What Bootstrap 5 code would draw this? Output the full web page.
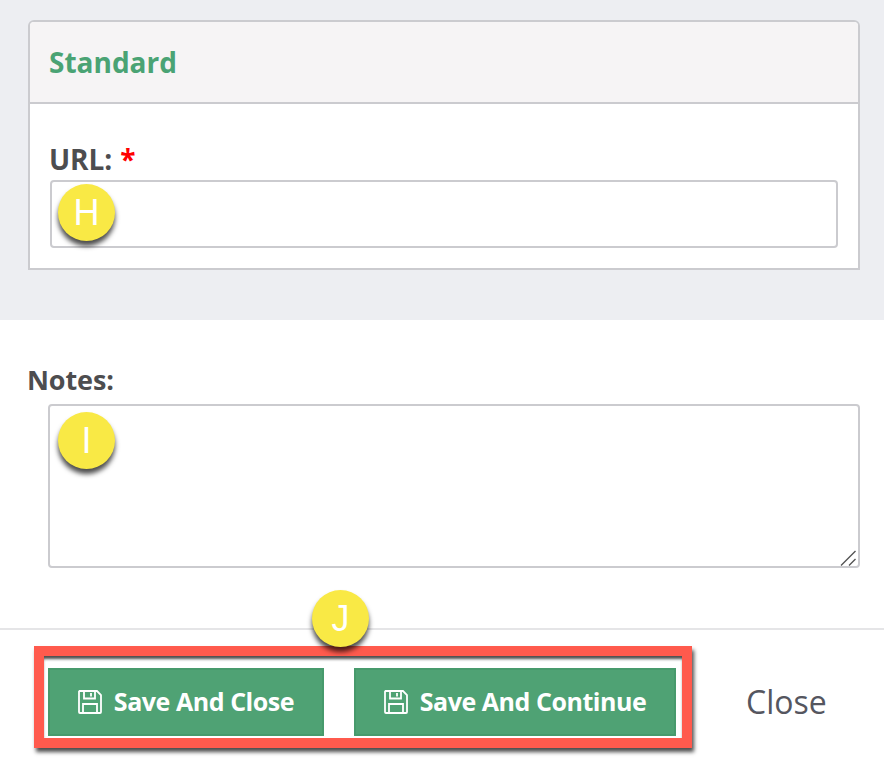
<!DOCTYPE html>
<html lang="en">
<head>
  <meta charset="UTF-8" />
  <meta name="viewport" content="width=device-width, initial-scale=1.0" />
  <title>Standard</title>
  <link href="https://cdn.jsdelivr.net/npm/bootstrap@5.3.0/dist/css/bootstrap.min.css" rel="stylesheet" />
  <style>
    html, body { height: 766px; overflow: hidden; }
    body { font-family: "Open Sans", sans-serif; color: #4d4d4f; background: #fff; }
    .top-band { height: 320px; padding: 20px 24px 0 28px; background: #edeef2; }
    .std-card { height: 250px; border: 2px solid #cbcbcf; border-radius: 6px 6px 0 0; background: #fff; }
    .std-card .card-header { height: 82px; padding: 0 19px; display: flex; align-items: center; background: #f6f4f5; border-bottom: 2px solid #cbcbcf; border-radius: 4px 4px 0 0; }
    .std-title { font-size: 28px; font-weight: 700; color: #4aa374; line-height: 1; }
    .std-card .card-body { padding: 39px 20px 0; }
    .field-label { display: block; margin: 0 0 0 -1px; font-size: 27px; font-weight: 700; line-height: 33px; letter-spacing: -.1px; }
    .url-label { font-size: 28px; }
    .req { color: #f00; margin-left: 1px; }
    .form-control.url-input { height: 68px; border: 2px solid #cbcbcf; border-radius: 4px; margin-top: 4px; }
    .notes-area { padding: 43px 24px 0 28px; }
    .notes-wrap { position: relative; width: 812px; height: 164px; margin: 8px 0 0 20px; }
    .form-control.notes-input { height: 164px; border: 2px solid #cbcbcf; border-radius: 4px; resize: none; }
    .notes-grip { position: absolute; right: 2px; bottom: 2px; }
    .foot-bar { margin-top: 60px; height: 138px; padding: 38px 0 0 48px; border-top: 2px solid #e5e5e7; }
    .btn.save-btn { height: 68px; padding: 0; display: flex; align-items: center; justify-content: center; gap: 12px; font-size: 25px; font-weight: 700; letter-spacing: -.45px; color: #fff; background: #4fa274; border: 2px solid #479a6c; border-radius: 0; }
    .save-one { width: 276px; }
    .save-two { width: 322px; margin-left: 30px; }
    .close-link { margin-left: 70px; font-size: 32px; line-height: 68px; color: #55565f; text-decoration: none; }
    .mark-dot { position: absolute; width: 57px; height: 57px; border-radius: 50%; background: #f9e945; color: #fff; font-family: "Liberation Sans", sans-serif; font-size: 36px; line-height: 57px; text-align: center; box-shadow: 0 5px 5px rgba(0, 0, 0, .7); z-index: 3; }
    .dot-h { left: 58px; top: 184px; }
    .dot-i { left: 58px; top: 412px; }
    .dot-j { left: 312px; top: 590px; }
    .red-box { position: absolute; left: 34px; top: 646px; width: 658px; height: 102px; border: 10px solid #ff5a4d; box-shadow: 2px 4px 4px rgba(0, 0, 0, .7), inset 0 4px 3px -1px rgba(0, 0, 0, .7); z-index: 2; pointer-events: none; }
  </style>
</head>
<body>
  <div class="top-band">
    <div class="card std-card">
      <div class="card-header"><span class="std-title">Standard</span></div>
      <div class="card-body">
        <label class="field-label url-label" for="url">URL: <span class="req">*</span></label>
        <input type="text" class="form-control url-input" id="url" />
      </div>
    </div>
  </div>

  <div class="notes-area">
    <label class="field-label" for="notes">Notes:</label>
    <div class="notes-wrap">
      <textarea class="form-control notes-input d-block" id="notes"></textarea>
      <svg class="notes-grip" width="18" height="16" viewBox="0 0 18 16" fill="none" stroke="#555" stroke-width="1.4"><path d="M1 15.5 15.5 1M9 15.5 15.5 9"/></svg>
    </div>
  </div>

  <div class="foot-bar d-flex align-items-start">
    <button type="button" class="btn save-btn save-one">
      <svg width="24" height="24" viewBox="0 0 24 24" fill="none" stroke="#fff" stroke-width="1.8"><path d="M1.5 1h17.5l4 4v17a1 1 0 0 1-1 1H2a1 1 0 0 1-1-1V1.5z"/><path d="M6 1v7.5h11V1M13 3v3.5"/><path d="M5 23v-9h14v9"/></svg>
      Save And Close
    </button>
    <button type="button" class="btn save-btn save-two">
      <svg width="24" height="24" viewBox="0 0 24 24" fill="none" stroke="#fff" stroke-width="1.8"><path d="M1.5 1h17.5l4 4v17a1 1 0 0 1-1 1H2a1 1 0 0 1-1-1V1.5z"/><path d="M6 1v7.5h11V1M13 3v3.5"/><path d="M5 23v-9h14v9"/></svg>
      Save And Continue
    </button>
    <a href="#" class="close-link">Close</a>
  </div>

  <div class="mark-dot dot-h">H</div>
  <div class="mark-dot dot-i">I</div>
  <div class="mark-dot dot-j">J</div>
  <div class="red-box"></div>

  <script src="https://cdn.jsdelivr.net/npm/bootstrap@5.3.0/dist/js/bootstrap.bundle.min.js"></script>
</body>
</html>
